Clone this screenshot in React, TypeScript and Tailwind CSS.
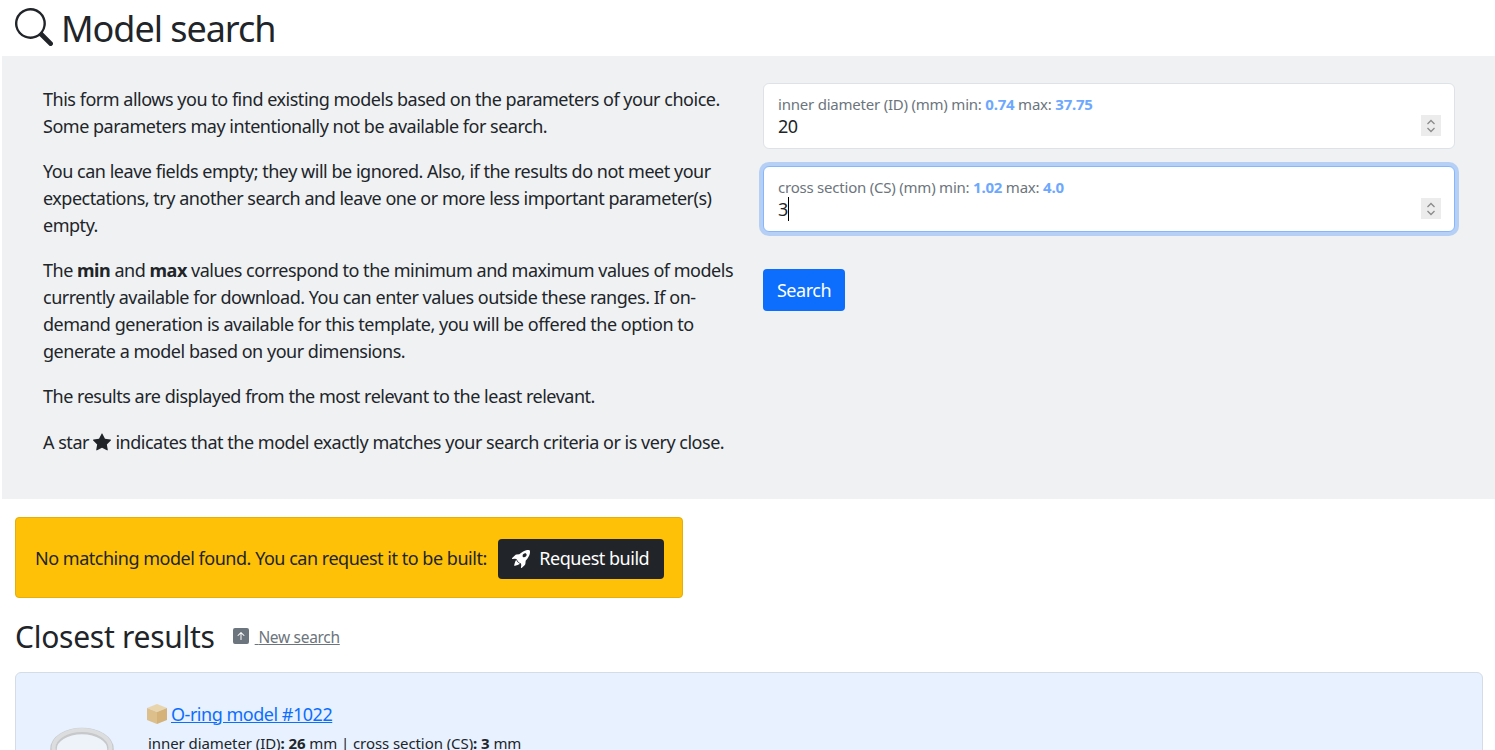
import React from "react";

const F = "font-['Noto_Sans','Open_Sans',sans-serif]";

function Field({ label, min, max, value, focus }: { label: string; min: string; max: string; value: string; focus?: boolean }) {
  return (
    <div
      className={`relative h-[66px] rounded-[6px] bg-white border px-[14px] pt-[11px] ${
        focus ? "border-[#86b7fe] shadow-[0_0_0_4px_rgba(13,110,253,0.25)]" : "border-[#dee2e6]"
      }`}
    >
      <div className="text-[15px] leading-[18px] text-[#6c757d] tracking-[-0.22px]">
        {label} min: <b className="text-[#6ea8fe] font-bold">{min}</b> max: <b className="text-[#6ea8fe] font-bold">{max}</b>
      </div>
      <div className="text-[18px] leading-[26px] text-[#212529] tracking-[-0.5px] flex items-center">
        {value}
        {focus && <span className="inline-block w-[1px] h-[24px] bg-black" />}
      </div>
      <div className="absolute right-[13px] top-[31px] w-[20px] h-[21px] bg-[#ececec] flex flex-col items-center justify-center">
        <svg width="10" height="16" viewBox="0 0 10 16" fill="none" stroke="#8a8a8a" strokeWidth="1.3">
          <path d="M1.5 6 L5 2.5 L8.5 6" />
          <path d="M1.5 10 L5 13.5 L8.5 10" />
        </svg>
      </div>
    </div>
  );
}

export default function App() {
  return (
    <div className={`${F} h-[750px] overflow-hidden bg-white text-[#212529] text-[18px] leading-[27px] tracking-[-0.48px]`}>
      <div className="h-[56px] pl-[15px] flex items-center">
        <svg width="38" height="38" viewBox="0 0 16 16" fill="#212529" className="mr-[9px] mt-[-3px]">
          <path d="M11.742 10.344a6.5 6.5 0 1 0-1.397 1.398h-.001c.03.04.062.078.098.115l3.85 3.85a1 1 0 0 0 1.415-1.414l-3.85-3.85a1.007 1.007 0 0 0-.115-.1zM12 6.5a5.5 5.5 0 1 1-11 0 5.5 5.5 0 0 1 11 0z" />
        </svg>
        <h1 className="text-[36px] leading-[43px] font-normal tracking-[-1.05px] -ml-[1px]">Model search</h1>
      </div>

      <div className="ml-[2px] h-[443px] bg-[#eff1f3] flex pl-[41px] pr-[40px] pt-[30px]">
        <div className="w-[695px] shrink-0">
          <p className="mb-[18px]">
            This form allows you to find existing models based on the parameters of your choice. Some parameters may intentionally not be available for search.
          </p>
          <p className="mb-[18px]">
            You can leave fields empty; they will be ignored. Also, if the results do not meet your expectations, try another search and leave one or more less important parameter(s) empty.
          </p>
          <p className="mb-[18px]">
            The <b>min</b> and <b>max</b> values correspond to the minimum and maximum values of models currently available for download. You can enter values outside these ranges. If on-demand generation is available for this template, you will be offered the option to generate a model based on your dimensions.
          </p>
          <p className="mb-[18px]">The results are displayed from the most relevant to the least relevant.</p>
          <p className="pt-[1px]">
            A star{" "}
            <svg width="18" height="18" viewBox="0 0 16 16" fill="#212529" className="inline-block align-[-2px]">
              <path d="M3.612 15.443c-.386.198-.824-.149-.746-.592l.83-4.73L.173 6.765c-.329-.314-.158-.888.283-.95l4.898-.696L7.538.792c.197-.39.73-.39.927 0l2.184 4.327 4.898.696c.441.062.612.636.282.95l-3.522 3.356.83 4.73c.078.443-.36.79-.746.592L8 13.187l-4.389 2.256z" />
            </svg>{" "}
            indicates that the model exactly matches your search criteria or is very close.
          </p>
        </div>
        <div className="ml-[25px] flex-1 mt-[-3px]">
          <Field label="inner diameter (ID) (mm)" min="0.74" max="37.75" value="20" />
          <div className="h-[17px]" />
          <Field label="cross section (CS) (mm)" min="1.02" max="4.0" value="3" focus />
          <button className="mt-[37px] block w-[82px] h-[42px] rounded-[4px] bg-[#0d6efd] text-white text-[18px] pt-[1px]">Search</button>
        </div>
      </div>

      <div className="ml-[15px] mt-[18px] w-[668px] h-[81px] rounded-[4px] bg-[#ffc107] border border-[#e6ae06] flex items-center pl-[19px] pt-[2px]">
        <span>No matching model found. You can request it to be built:</span>
        <button className="ml-[11px] w-[166px] h-[40px] rounded-[4px] bg-[#212529] text-white flex items-center justify-center gap-[9px]">
          <svg width="18" height="18" viewBox="0 0 16 16" fill="white">
            <path d="M12.17 9.53c2.307-2.592 3.278-4.684 3.641-6.218.21-.887.214-1.58.16-2.065a3.578 3.578 0 0 0-.108-.563 2.22 2.22 0 0 0-.078-.23V.453c-.073-.164-.168-.234-.352-.295a2.35 2.35 0 0 0-.16-.045 3.797 3.797 0 0 0-.57-.093c-.49-.044-1.19-.03-2.08.188-1.536.374-3.618 1.343-6.161 3.604l-2.4.238h-.006a2.552 2.552 0 0 0-1.524.734L.15 7.17a.512.512 0 0 0 .433.868l1.896-.271c.28-.04.592.013.955.132.232.076.437.16.655.248l.203.083c.196.816.66 1.58 1.275 2.195.613.614 1.376 1.08 2.191 1.277l.082.202c.089.218.173.424.249.657.118.363.172.676.132.956l-.271 1.9a.512.512 0 0 0 .867.433l2.382-2.386c.41-.41.668-.949.732-1.526l.24-2.408Zm.11-3.699c-.797.8-1.93.961-2.528.362-.598-.6-.436-1.733.361-2.532.798-.799 1.93-.96 2.528-.361.599.599.437 1.732-.36 2.531Z" />
            <path d="M5.205 10.787a7.632 7.632 0 0 0 1.804 1.352c-1.118 1.007-4.929 2.028-5.054 1.903-.126-.127.737-4.189 1.839-5.18.346.69.837 1.35 1.411 1.925Z" />
          </svg>
          Request build
        </button>
      </div>

      <div className="ml-[15px] mt-[17px] h-[44px] flex items-center">
        <h2 className="text-[30px] leading-[36px] font-normal tracking-[-0.27px]">Closest results</h2>
        <a className="ml-[18px] flex items-center text-[15.5px] text-[#6c757d] tracking-[-0.3px]">
          <svg width="16" height="16" viewBox="0 0 16 16" fill="#6c757d" className="mt-[-3px]">
            <path d="M2 0a2 2 0 0 0-2 2v12a2 2 0 0 0 2 2h12a2 2 0 0 0 2-2V2a2 2 0 0 0-2-2H2zm6.5 11.5a.5.5 0 0 1-1 0V5.707L5.354 7.854a.5.5 0 1 1-.708-.708l3-3a.5.5 0 0 1 .708 0l3 3a.5.5 0 0 1-.708.708L8.5 5.707V11.5z" />
          </svg>
          <span className="ml-[6px] underline whitespace-pre">{" "}New search</span>
        </a>
      </div>

      <div className="ml-[15px] mt-[13px] w-[1468px] h-[200px] rounded-t-[6px] bg-[#e7f1ff] border border-[#d5dce6] flex pl-[31px] pt-[29px]">
        <div className="w-[70px] shrink-0 pt-[24px]">
          <svg width="68" height="50" viewBox="0 0 68 50" fill="none" className="blur-[0.7px]">
            <ellipse cx="35" cy="23" rx="28.5" ry="18" fill="#eef3fa" />
            <ellipse cx="35" cy="23" rx="28.5" ry="18" stroke="#c6c8ca" strokeWidth="6.5" />
            <ellipse cx="35" cy="22" rx="28.5" ry="18" stroke="#dcdddf" strokeWidth="4" />
          </svg>
        </div>
        <div className="ml-[31px]">
          <div className="flex items-center h-[24px]">
            <svg width="20" height="20" viewBox="0 0 20 20" className="mr-[4px] -ml-[1px]">
              <path d="M10 0 L20 4 L10 8 L0 4 Z" fill="#e8d5ae" />
              <path d="M0 4 L10 8 V20 L0 16 Z" fill="#dcbf8a" />
              <path d="M20 4 L10 8 V20 L20 16 Z" fill="#d4b27a" />
            </svg>
            <a className="text-[#0d6efd] underline">O-ring model #1022</a>
          </div>
          <div className="text-[15px] mt-[4px] tracking-[-0.08px]">
            inner diameter (ID)<b>:</b> <b>26</b> mm | cross section (CS)<b>:</b> <b>3</b> mm
          </div>
        </div>
      </div>
    </div>
  );
}
